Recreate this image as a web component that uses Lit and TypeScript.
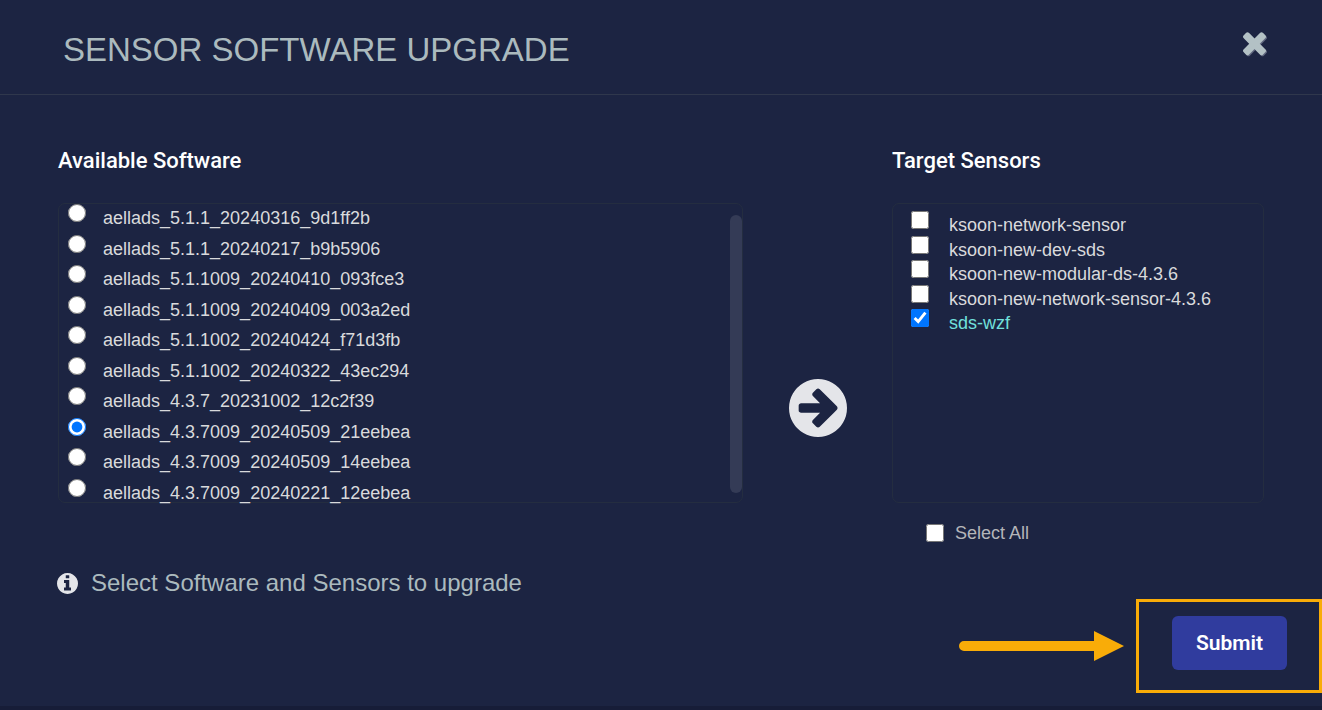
import { LitElement, html, css } from "lit";
import { customElement, state } from "lit/decorators.js";

const SOFTWARE = [
  "aellads_5.1.1_20240316_9d1ff2b",
  "aellads_5.1.1_20240217_b9b5906",
  "aellads_5.1.1009_20240410_093fce3",
  "aellads_5.1.1009_20240409_003a2ed",
  "aellads_5.1.1002_20240424_f71d3fb",
  "aellads_5.1.1002_20240322_43ec294",
  "aellads_4.3.7_20231002_12c2f39",
  "aellads_4.3.7009_20240509_21eebea",
  "aellads_4.3.7009_20240509_14eebea",
  "aellads_4.3.7009_20240221_12eebea",
];

const SENSORS = [
  "ksoon-network-sensor",
  "ksoon-new-dev-sds",
  "ksoon-new-modular-ds-4.3.6",
  "ksoon-new-network-sensor-4.3.6",
  "sds-wzf",
];

@customElement("app-root")
export class AppRoot extends LitElement {
  @state() private software = "aellads_4.3.7009_20240509_21eebea";
  @state() private sensors: string[] = ["sds-wzf"];

  static styles = css`
    :host {
      display: block;
      font-family: "Liberation Sans", Arial, sans-serif;
      color: #d9dadc;
    }
    * {
      box-sizing: border-box;
    }
    .dialog {
      min-height: 100vh;
      background: #1c2442;
      border-bottom: 4px solid #171d38;
      display: flex;
      flex-direction: column;
    }
    .header {
      display: flex;
      justify-content: space-between;
      align-items: flex-start;
      padding: 29px 56px 23px 63px;
      border-bottom: 1px solid #2f374c;
    }
    h1 {
      margin: 0;
      font-size: 33px;
      line-height: 42px;
      font-weight: 400;
      color: #abbabe;
    }
    .close {
      margin-top: 2px;
      padding: 0;
      border: 0;
      background: none;
      color: #b3c1c5;
      cursor: pointer;
      line-height: 0;
    }
    .close svg {
      width: 23px;
      height: 23px;
      filter: drop-shadow(1px 1px 0 #60677f);
      overflow: visible;
    }
    .columns {
      display: grid;
      grid-template-columns: 1fr 149px 372px;
      grid-template-rows: auto 300px auto;
      padding: 50px 58px 0;
    }
    h2 {
      margin: 0 0 26px;
      font-family: Roboto, sans-serif;
      font-size: 22px;
      line-height: 32px;
      font-weight: 500;
      color: #fff;
    }
    .targets-title,
    .targets {
      grid-column: 3;
    }
    .panel {
      border: 1px solid #242d40;
      border-radius: 7px;
      font-size: 18px;
      line-height: 20px;
    }
    .software {
      position: relative;
      padding-left: 9px;
    }
    .list {
      display: grid;
      grid-auto-rows: 1fr;
    }
    .software .list {
      height: 305px;
    }
    .targets .list {
      height: 123px;
    }
    .thumb {
      position: absolute;
      top: 11px;
      right: 0;
      width: 12px;
      height: 278px;
      border-radius: 6px;
      background: #343b56;
    }
    .targets {
      padding: 7px 0 0 18px;
    }
    .row {
      display: flex;
      align-items: flex-start;
    }
    input {
      width: 18px;
      height: 18px;
      margin: 0;
      flex: none;
    }
    .row label {
      margin-top: 4px;
    }
    .software .row {
      gap: 17px;
    }
    .targets .row {
      gap: 20px;
    }
    .on {
      color: #71e0dc;
    }
    .arrow {
      display: flex;
      align-items: center;
      justify-content: center;
      padding-top: 110px;
      color: #e4e5e9;
    }
    .arrow svg {
      width: 58px;
      height: 58px;
    }
    .all {
      grid-column: 3;
      display: flex;
      align-items: center;
      gap: 11px;
      padding: 18px 0 0 34px;
      font-size: 18px;
      line-height: 24px;
      color: #b4b5b9;
    }
    .hint {
      display: flex;
      align-items: center;
      gap: 13px;
      margin: 23px 57px 0;
      font-size: 24px;
      line-height: 30px;
      color: #abbabe;
    }
    .hint svg {
      width: 21px;
      height: 21px;
      color: #e4e5e9;
    }
    .footer {
      display: flex;
      justify-content: flex-end;
      align-items: center;
      gap: 12px;
      margin-top: 1px;
    }
    .pointer {
      width: 165px;
      height: 30px;
      color: #f9ac08;
    }
    .frame {
      border: 3px solid #f9ac08;
      padding: 14px 32px 20px 33px;
    }
    .submit {
      display: block;
      width: 115px;
      height: 54px;
      padding: 0;
      border: 0;
      border-radius: 6px;
      background: #303c9e;
      color: #fff;
      font-family: Roboto, sans-serif;
      font-size: 21px;
      font-weight: 600;
      cursor: pointer;
    }
  `;

  private toggle(name: string, on: boolean) {
    this.sensors = on
      ? [...this.sensors, name]
      : this.sensors.filter((s) => s !== name);
  }

  private softwareRow = (name: string, i: number) => html`
    <div class="row">
      <input
        type="radio"
        name="software"
        id="sw-${i}"
        .checked=${this.software === name}
        @change=${() => (this.software = name)}
      />
      <label for="sw-${i}">${name}</label>
    </div>
  `;

  private sensorRow = (name: string, i: number) => {
    const on = this.sensors.includes(name);
    return html`
      <div class="row">
        <input
          type="checkbox"
          id="sensor-${i}"
          .checked=${on}
          @change=${(e: Event) =>
            this.toggle(name, (e.target as HTMLInputElement).checked)}
        />
        <label for="sensor-${i}" class=${on ? "on" : ""}>${name}</label>
      </div>
    `;
  };

  render() {
    return html`
      <div class="dialog">
        <header class="header">
          <h1>SENSOR SOFTWARE UPGRADE</h1>
          <button class="close" aria-label="Close">
            <svg viewBox="302 302 1188 1188" fill="currentColor">
              <path
                d="M1490 1322q0 40-28 68l-136 136q-28 28-68 28t-68-28l-294-294-294 294q-28 28-68 28t-68-28l-136-136q-28-28-28-68t28-68l294-294-294-294q-28-28-28-68t28-68l136-136q28-28 68-28t68 28l294 294 294-294q28-28 68-28t68 28l136 136q28 28 28 68t-28 68l-294 294 294 294q28 28 28 68z"
              />
            </svg>
          </button>
        </header>

        <main class="columns">
          <h2>Available Software</h2>
          <h2 class="targets-title">Target Sensors</h2>
          <div class="panel software">
            <div class="list" role="radiogroup" aria-label="Available Software">
              ${SOFTWARE.map(this.softwareRow)}
            </div>
            <div class="thumb"></div>
          </div>
          <div class="arrow">
            <svg viewBox="128 128 1536 1536" fill="currentColor" aria-hidden="true">
              <path
                d="M1413 896q0-27-18-45l-91-91-362-362q-18-18-45-18t-45 18l-91 91q-18 18-18 45t18 45l189 189h-502q-26 0-45 19t-19 45v128q0 26 19 45t45 19h502l-189 189q-19 19-19 45t19 45l91 91q18 18 45 18t45-18l362-362 91-91q18-18 18-45zm251 0q0 209-103 385.500t-279.500 279.500-385.500 103-385.500-103-279.500-279.500-103-385.500 103-385.500 279.500-279.500 385.500-103 385.500 103 279.500 279.500 103 385.500z"
              />
            </svg>
          </div>
          <div class="panel targets">
            <div class="list">${SENSORS.map(this.sensorRow)}</div>
          </div>
          <div class="all">
            <input
              type="checkbox"
              id="all"
              .checked=${this.sensors.length === SENSORS.length}
              @change=${(e: Event) =>
                (this.sensors = (e.target as HTMLInputElement).checked
                  ? [...SENSORS]
                  : [])}
            />
            <label for="all">Select All</label>
          </div>
        </main>

        <div class="hint">
          <svg viewBox="128 128 1536 1536" fill="currentColor" aria-hidden="true">
            <path
              d="M1152 1376v-160q0-14-9-23t-23-9h-96v-512q0-14-9-23t-23-9h-320q-14 0-23 9t-9 23v160q0 14 9 23t23 9h96v320h-96q-14 0-23 9t-9 23v160q0 14 9 23t23 9h448q14 0 23-9t9-23zm-128-896v-160q0-14-9-23t-23-9h-192q-14 0-23 9t-9 23v160q0 14 9 23t23 9h192q14 0 23-9t9-23zm640 416q0 209-103 385.500t-279.500 279.500-385.500 103-385.500-103-279.500-279.500-103-385.500 103-385.500 279.500-279.500 385.500-103 385.500 103 279.500 279.500 103 385.500z"
            />
          </svg>
          <span>Select Software and Sensors to upgrade</span>
        </div>

        <footer class="footer">
          <svg class="pointer" viewBox="0 0 165 30" fill="currentColor" aria-hidden="true">
            <path d="M5 10H135V0L165 15L135 30V20H5A5 5 0 0 1 5 10Z" />
          </svg>
          <div class="frame">
            <button class="submit">Submit</button>
          </div>
        </footer>
      </div>
    `;
  }
}
